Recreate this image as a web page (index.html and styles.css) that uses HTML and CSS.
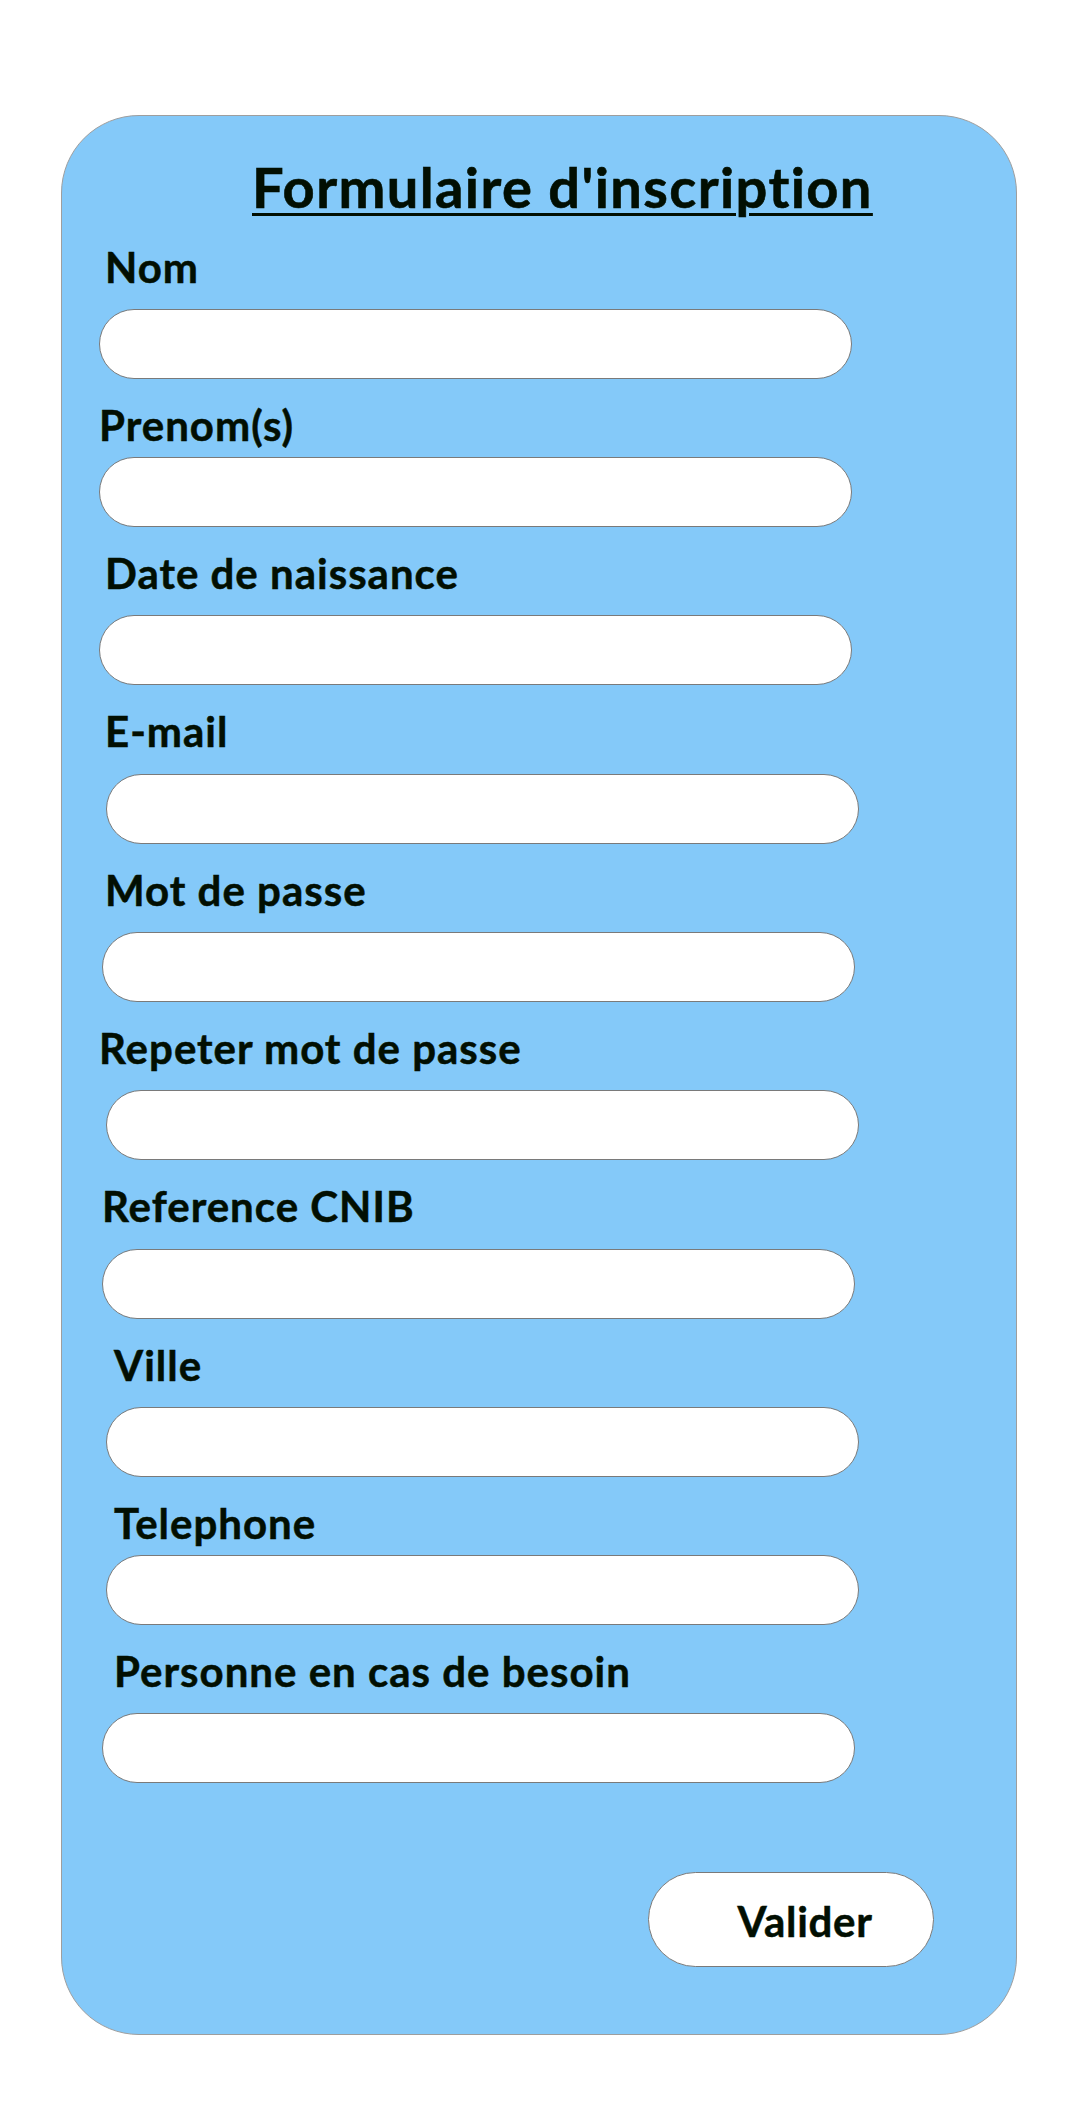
FILE: index.html
```html
<!DOCTYPE html>
<html lang="fr">
<head>
<meta charset="utf-8">
<title>Formulaire d'inscription</title>
<link rel="stylesheet" href="styles.css">
</head>
<body>
<form class="card">
  <h1 class="title">Formulaire d'inscription</h1>

  <div class="field">
    <label class="label lbl-a">Nom</label>
    <input class="input" type="text">
  </div>
  <div class="field">
    <label class="label lbl-b">Prenom(s)</label>
    <input class="input close" type="text">
  </div>
  <div class="field">
    <label class="label lbl-a">Date de naissance</label>
    <input class="input" type="text">
  </div>
  <div class="field">
    <label class="label lbl-a">E-mail</label>
    <input class="input in-c" type="text">
  </div>
  <div class="field">
    <label class="label lbl-a">Mot de passe</label>
    <input class="input in-b" type="text">
  </div>
  <div class="field">
    <label class="label lbl-b">Repeter mot de passe</label>
    <input class="input in-c" type="text">
  </div>
  <div class="field">
    <label class="label lbl-c">Reference CNIB</label>
    <input class="input in-b" type="text">
  </div>
  <div class="field">
    <label class="label lbl-d">Ville</label>
    <input class="input in-c" type="text">
  </div>
  <div class="field">
    <label class="label lbl-d">Telephone</label>
    <input class="input in-c close" type="text">
  </div>
  <div class="field">
    <label class="label lbl-d">Personne en cas de besoin</label>
    <input class="input in-b" type="text">
  </div>

  <button class="submit" type="button">Valider</button>
</form>
</body>
</html>
```

FILE: styles.css
```css
* { box-sizing: border-box; }

html, body {
  margin: 0;
  padding: 0;
  background: #ffffff;
}

body {
  font-family: Lato, "Open Sans", sans-serif;
  color: #020f02;
}

.card {
  width: 956px;
  height: 1920px;
  margin: 115px 0 0 61px;
  padding: 39px 0 0 37px;
  background: #84c9f9;
  border: 1px solid #9e9e9e;
  border-radius: 78px;
  display: flex;
  flex-direction: column;
}

.title {
  margin: 0 0 24px 153px;
  font-size: 56px;
  line-height: 64px;
  font-weight: 700;
  letter-spacing: 1.4px;
  -webkit-text-stroke: 0.6px #020f02;
  text-decoration: underline;
  text-decoration-thickness: 3px;
  text-underline-offset: 5px;
}

.field {
  display: flex;
  flex-direction: column;
  align-items: flex-start;
  margin-bottom: 22px;
}

.label {
  display: block;
  font-size: 42px;
  line-height: 48px;
  font-weight: 700;
  letter-spacing: 1px;
  -webkit-text-stroke: 0.5px #020f02;
}

.lbl-a { margin-left: 6px; }
.lbl-b { margin-left: 0; }
.lbl-c { margin-left: 3px; }
.lbl-d { margin-left: 15px; }

.input {
  width: 753px;
  height: 70px;
  margin-top: 18.4px;
  padding: 0 30px;
  border: 1px solid #7a7a7a;
  border-radius: 35px;
  background: #ffffff;
  font: inherit;
  font-size: 28px;
  outline: none;
}

.input.close { margin-top: 7.4px; }
.in-b { margin-left: 3px; }
.in-c { margin-left: 7px; }

.submit {
  align-self: flex-end;
  width: 286px;
  height: 95px;
  margin: 67px 82px 0 0;
  padding: 4px 0 0 28px;
  border: 1px solid #7a7a7a;
  border-radius: 48px;
  background: #ffffff;
  color: #020f02;
  font-family: Lato, "Open Sans", sans-serif;
  font-size: 42px;
  line-height: 89px;
  font-weight: 700;
  letter-spacing: 0.7px;
  -webkit-text-stroke: 0.5px #020f02;
  text-align: center;
  cursor: pointer;
}
```
